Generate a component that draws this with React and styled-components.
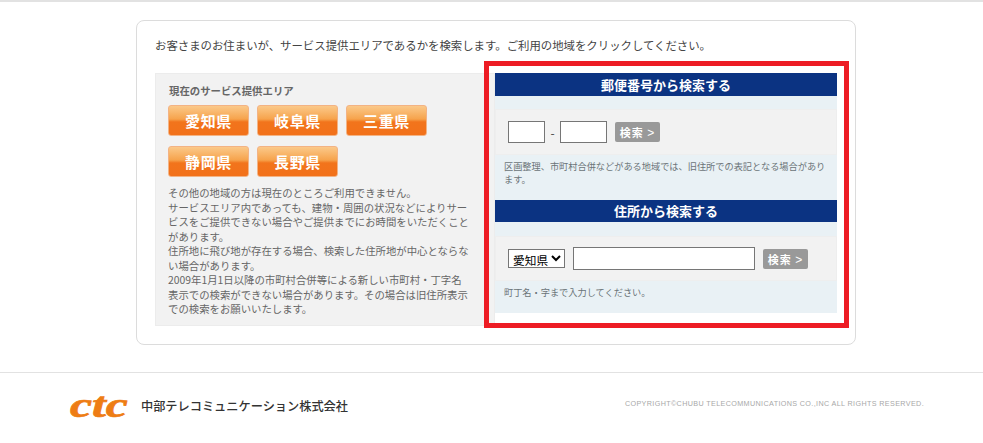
import React from 'react';
import styled, { createGlobalStyle } from 'styled-components';

const Global = createGlobalStyle`
  html, body { margin: 0; padding: 0; background: #fff; }
  body { font-family: "Noto Sans CJK JP", "Noto Sans", sans-serif; color: #555; }
`;

const Page = styled.div`
  border-top: 2px solid #e2e2e2;
  padding-top: 18px;
  width: 983px;
`;

const Card = styled.main`
  box-sizing: border-box;
  position: relative;
  width: 720px;
  height: 325px;
  margin-left: 136px;
  border: 1px solid #dcdcdc;
  border-radius: 8px;
  padding: 14px 18px 0;
`;

const Lead = styled.p`
  margin: 0 0 18px;
  font-size: 11.4px;
  line-height: 20px;
  color: #444;
`;

const Columns = styled.div`
  display: flex;
  align-items: flex-start;
`;

const AreaPanel = styled.section`
  box-sizing: border-box;
  width: 340px;
  height: 253px;
  background: #f2f2f2;
  border: 1px solid #ececec;
  padding: 9px 13px 0 12px;
`;

const AreaTitle = styled.h2`
  margin: 0 0 6px 1px;
  font-size: 10.4px;
  line-height: 16px;
  font-weight: 700;
  color: #666;
`;

const PrefGrid = styled.div`
  display: grid;
  grid-template-columns: repeat(3, 81px);
  column-gap: 8px;
  row-gap: 10px;
`;

const PrefButton = styled.div`
  box-sizing: border-box;
  height: 31px;
  border: 1px solid #f3b384;
  border-radius: 3px;
  background: linear-gradient(#fbc98a 0%, #f6a34c 45%, #f2741c 55%, #f2711a 100%);
  color: #fff;
  font-size: 15px;
  font-weight: 700;
  letter-spacing: 0.7px;
  line-height: 29px;
  text-align: center;
`;

const AreaText = styled.p`
  width: 305px;
  margin: 9px 0 0;
  font-size: 10.38px;
  line-height: 14.5px;
  color: #666;
`;

const SearchColumn = styled.div`
  width: 342px;
`;

const Heading = styled.h2`
  margin: 0;
  height: ${p => p.$h}px;
  line-height: ${p => p.$h}px;
  background: #0b3382;
  color: #fff;
  font-size: 13px;
  font-weight: 700;
  text-align: center;
`;

const Block = styled.section`
  background: #e9f1f5;
  height: ${p => p.$h}px;
  padding-top: ${p => p.$pad}px;
  box-sizing: border-box;
`;

const FormRow = styled.div`
  box-sizing: border-box;
  display: flex;
  align-items: center;
  height: ${p => p.$h}px;
  padding-left: 12px;
  background: #f2f2f2;
  border: 1px solid #eeeeee;
`;

const Field = styled.input`
  box-sizing: border-box;
  width: ${p => p.$w}px;
  height: ${p => p.$h}px;
  padding: 0;
  background: #fff;
  border: 1px solid #767676;
  border-radius: 0;
  outline: none;
`;

const Dash = styled.span`
  width: 15px;
  text-align: center;
  font-size: 12px;
  color: #444;
`;

const SearchButton = styled.div`
  width: 45px;
  height: 20px;
  margin-left: 8px;
  border-radius: 2px;
  background: #999;
  color: #fff;
  font-size: 11px;
  font-weight: 700;
  letter-spacing: 1px;
  line-height: 20px;
  text-align: center;
`;

const Chevron = styled.span`
  font-family: "Liberation Sans", sans-serif;
  font-size: 12px;
  font-weight: 400;
`;

const Select = styled.select`
  box-sizing: border-box;
  width: 57px;
  height: 19px;
  margin-right: 8px;
  padding: 0 0 1px;
  background: #fff;
  border: 1px solid #767676;
  border-radius: 0;
  font-family: "Noto Sans CJK JP", sans-serif;
  font-size: 11.7px;
  color: #000;
`;

const Note = styled.p`
  margin: 5px 8px 0 9px;
  font-size: 9.2px;
  line-height: 13px;
  color: #6b7478;
`;

const Highlight = styled.div`
  position: absolute;
  left: 347px;
  top: 40px;
  width: 365px;
  height: 267px;
  box-sizing: border-box;
  border: 5px solid #ed1c24;
  pointer-events: none;
`;

const Footer = styled.footer`
  box-sizing: border-box;
  height: 69px;
  margin-top: 27px;
  border-top: 1px solid #e2e2e2;
  display: flex;
  align-items: center;
  padding: 0 59px 2px 70px;
`;

const LogoMark = styled.span`
  display: inline-block;
  width: 71px;
  margin-bottom: 3px;
  font-family: "Liberation Serif", serif;
  font-style: italic;
  font-weight: 700;
  font-size: 36px;
  line-height: 36px;
  color: #ee7d14;
  -webkit-text-stroke: 0.7px #ee7d14;
  transform: scaleX(1.38);
  transform-origin: left center;
`;

const Company = styled.span`
  font-size: 12.2px;
  font-weight: 500;
  color: #333;
`;

const Copyright = styled.span`
  margin-left: auto;
  margin-bottom: 5px;
  font-family: "Liberation Sans", sans-serif;
  font-size: 7.2px;
  letter-spacing: 0.37px;
  color: #a8a8a8;
  white-space: nowrap;
`;

const prefs = ['愛知県', '岐阜県', '三重県', '静岡県', '長野県'];

export default function App() {
  return (
    <>
      <Global />
      <Page>
        <Card>
          <Lead>お客さまのお住まいが、サービス提供エリアであるかを検索します。ご利用の地域をクリックしてください。</Lead>
          <Columns>
            <AreaPanel>
              <AreaTitle>現在のサービス提供エリア</AreaTitle>
              <PrefGrid>
                {prefs.map(p => <PrefButton key={p}>{p}</PrefButton>)}
              </PrefGrid>
              <AreaText>
                その他の地域の方は現在のところご利用できません。<br />
                サービスエリア内であっても、建物・周囲の状況などによりサービスをご提供できない場合やご提供までにお時間をいただくことがあります。<br />
                住所地に飛び地が存在する場合、検索した住所地が中心とならない場合があります。<br />
                2009年1月1日以降の市町村合併等による新しい市町村・丁字名<br />
                表示での検索ができない場合があります。その場合は旧住所表示での検索をお願いいたします。
              </AreaText>
            </AreaPanel>
            <SearchColumn>
              <Heading $h={23}>郵便番号から検索する</Heading>
              <Block $h={104} $pad={13}>
                <FormRow $h={46}>
                  <Field $w={37} $h={22} />
                  <Dash>-</Dash>
                  <Field $w={47} $h={22} />
                  <SearchButton>検索 <Chevron>&gt;</Chevron></SearchButton>
                </FormRow>
                <Note>区画整理、市町村合併などがある地域では、旧住所での表記となる場合があります。</Note>
              </Block>
              <Heading $h={22}>住所から検索する</Heading>
              <Block $h={91} $pad={14}>
                <FormRow $h={45}>
                  <Select defaultValue="愛知県">
                    {prefs.map(p => <option key={p}>{p}</option>)}
                  </Select>
                  <Field $w={182} $h={23} />
                  <SearchButton>検索 <Chevron>&gt;</Chevron></SearchButton>
                </FormRow>
                <Note>町丁名・字まで入力してください。</Note>
              </Block>
            </SearchColumn>
          </Columns>
          <Highlight />
        </Card>
        <Footer>
          <LogoMark>ctc</LogoMark>
          <Company>中部テレコミュニケーション株式会社</Company>
          <Copyright>COPYRIGHT©CHUBU TELECOMMUNICATIONS CO.,INC ALL RIGHTS RESERVED.</Copyright>
        </Footer>
      </Page>
    </>
  );
}
